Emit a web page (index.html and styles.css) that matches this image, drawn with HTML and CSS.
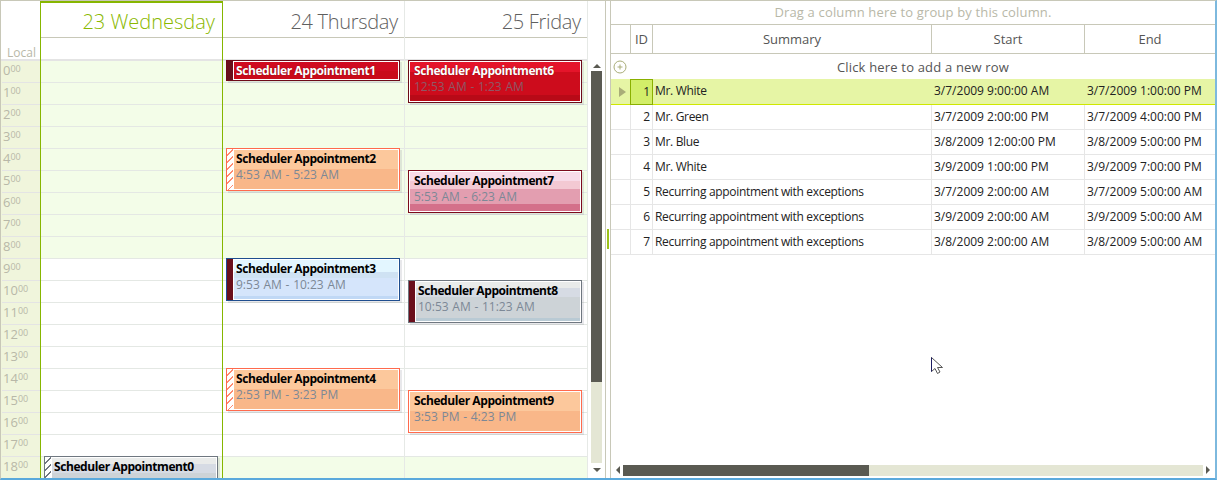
FILE: index.html
```html
<!DOCTYPE html>
<html lang="en">
<head>
<meta charset="utf-8">
<title>Scheduler and grid</title>
<link rel="stylesheet" href="styles.css">
</head>
<body>
<div class="window">
  <section class="sched">
    <div class="time-col">
      <div class="time-head">Local</div>
      <div class="hour">0<sup>00</sup></div><div class="hour">1<sup>00</sup></div><div class="hour">2<sup>00</sup></div><div class="hour">3<sup>00</sup></div><div class="hour">4<sup>00</sup></div><div class="hour">5<sup>00</sup></div><div class="hour">6<sup>00</sup></div><div class="hour">7<sup>00</sup></div><div class="hour">8<sup>00</sup></div><div class="hour">9<sup>00</sup></div><div class="hour">10<sup>00</sup></div><div class="hour">11<sup>00</sup></div><div class="hour">12<sup>00</sup></div><div class="hour">13<sup>00</sup></div><div class="hour">14<sup>00</sup></div><div class="hour">15<sup>00</sup></div><div class="hour">16<sup>00</sup></div><div class="hour">17<sup>00</sup></div><div class="hour">18<sup>00</sup></div>
    </div>

    <div class="day today">
      <div class="day-title">23 Wednesday</div>
      <div class="allday"></div>
      <div class="slots">
        <div class="slot"></div><div class="slot"></div><div class="slot"></div><div class="slot"></div><div class="slot"></div><div class="slot"></div><div class="slot"></div><div class="slot"></div><div class="slot"></div>
        <div class="slot work"></div><div class="slot work"></div><div class="slot work"></div><div class="slot work"></div><div class="slot work"></div><div class="slot work"></div><div class="slot work"></div><div class="slot work"></div><div class="slot work"></div>
        <div class="slot"></div>
        <div class="appt grey tall" style="top:395px"><div class="bar hatch-grey"></div><div class="appt-body"><b>Scheduler Appointment0</b></div></div>
      </div>
    </div>

    <div class="day">
      <div class="day-title">24 Thursday</div>
      <div class="allday"></div>
      <div class="slots">
        <div class="slot"></div><div class="slot"></div><div class="slot"></div><div class="slot"></div><div class="slot"></div><div class="slot"></div><div class="slot"></div><div class="slot"></div><div class="slot"></div>
        <div class="slot work"></div><div class="slot work"></div><div class="slot work"></div><div class="slot work"></div><div class="slot work"></div><div class="slot work"></div><div class="slot work"></div><div class="slot work"></div><div class="slot work"></div>
        <div class="slot"></div>
        <div class="appt red short" style="top:-1px"><div class="bar dark"></div><div class="appt-body"><b>Scheduler Appointment1</b></div></div>
        <div class="appt salmon" style="top:87px"><div class="bar hatch"></div><div class="appt-body"><b>Scheduler Appointment2</b><span>4:53 AM - 5:23 AM</span></div></div>
        <div class="appt blue" style="top:197px"><div class="bar dark"></div><div class="appt-body"><b>Scheduler Appointment3</b><span>9:53 AM - 10:23 AM</span></div></div>
        <div class="appt salmon" style="top:307px"><div class="bar hatch"></div><div class="appt-body"><b>Scheduler Appointment4</b><span>2:53 PM - 3:23 PM</span></div></div>
      </div>
    </div>

    <div class="day">
      <div class="day-title">25 Friday</div>
      <div class="allday"></div>
      <div class="slots">
        <div class="slot"></div><div class="slot"></div><div class="slot"></div><div class="slot"></div><div class="slot"></div><div class="slot"></div><div class="slot"></div><div class="slot"></div><div class="slot"></div>
        <div class="slot work"></div><div class="slot work"></div><div class="slot work"></div><div class="slot work"></div><div class="slot work"></div><div class="slot work"></div><div class="slot work"></div><div class="slot work"></div><div class="slot work"></div>
        <div class="slot"></div>
        <div class="appt red nobar" style="top:-1px"><div class="appt-body"><b>Scheduler Appointment6</b><span>12:53 AM - 1:23 AM</span></div></div>
        <div class="appt pink nobar" style="top:109px"><div class="appt-body"><b>Scheduler Appointment7</b><span>5:53 AM - 6:23 AM</span></div></div>
        <div class="appt grey" style="top:219px"><div class="bar dark"></div><div class="appt-body"><b>Scheduler Appointment8</b><span>10:53 AM - 11:23 AM</span></div></div>
        <div class="appt salmon nobar" style="top:329px"><div class="appt-body"><b>Scheduler Appointment9</b><span>3:53 PM - 4:23 PM</span></div></div>
      </div>
    </div>
  </section>

  <div class="vscroll">
    <i class="arrow up"></i>
    <div class="vthumb"></div>
    <div class="vtrack"></div>
    <i class="arrow down"></i>
  </div>

  <div class="splitter"><div class="grip"></div></div>

  <section class="grid">
    <div class="group">Drag a column here to group by this column.</div>
    <div class="row head">
      <div></div><div>ID</div><div>Summary</div><div>Start</div><div>End</div>
    </div>
    <div class="newrow">
      <svg class="plus" width="14" height="14" viewBox="0 0 14 14"><circle cx="7" cy="7" r="6" fill="none" stroke="#a9ad78"/><path d="M7 4.5v5M4.5 7h5" stroke="#a9ad78" fill="none"/></svg>
      <span>Click here to add a new row</span>
    </div>
    <div class="row data selected">
      <div class="ind"><i class="tri"></i></div><div class="id">1</div><div class="sum">Mr. White</div><div>3/7/2009 9:00:00 AM</div><div>3/7/2009 1:00:00 PM</div>
    </div>
    <div class="row data"><div></div><div class="id">2</div><div class="sum">Mr. Green</div><div>3/7/2009 2:00:00 PM</div><div>3/7/2009 4:00:00 PM</div></div>
    <div class="row data"><div></div><div class="id">3</div><div class="sum">Mr. Blue</div><div>3/8/2009 12:00:00 PM</div><div>3/8/2009 5:00:00 PM</div></div>
    <div class="row data"><div></div><div class="id">4</div><div class="sum">Mr. White</div><div>3/9/2009 1:00:00 PM</div><div>3/9/2009 7:00:00 PM</div></div>
    <div class="row data"><div></div><div class="id">5</div><div class="sum">Recurring appointment with exceptions</div><div>3/7/2009 2:00:00 AM</div><div>3/7/2009 5:00:00 AM</div></div>
    <div class="row data"><div></div><div class="id">6</div><div class="sum">Recurring appointment with exceptions</div><div>3/9/2009 2:00:00 AM</div><div>3/9/2009 5:00:00 AM</div></div>
    <div class="row data"><div></div><div class="id">7</div><div class="sum">Recurring appointment with exceptions</div><div>3/8/2009 2:00:00 AM</div><div>3/8/2009 5:00:00 AM</div></div>
    <div class="grid-fill"></div>
    <div class="hscroll">
      <i class="arrow left"></i>
      <div class="hthumb"></div>
      <div class="htrack"></div>
      <i class="arrow right"></i>
    </div>
    <svg class="cursor" width="14" height="20" viewBox="0 0 14 20"><path d="M1.5 1.5V15.5L5 12.5L7.5 17.5L10 16L7.5 11.5H12.5Z" fill="#fff" stroke="#555"/><path d="M1.5 1.5V15.5" stroke="#1c1c60" fill="none"/></svg>
  </section>
</div>
</body>
</html>
```

FILE: styles.css
```css
* { box-sizing: border-box; }
html, body { margin: 0; padding: 0; }
body {
  width: 1217px;
  height: 480px;
  overflow: hidden;
  background: #fff;
  font-family: "Open Sans", "Liberation Sans", sans-serif;
  font-size: 12px;
}
.window {
  display: flex;
  width: 1217px;
  height: 480px;
  overflow: hidden;
  border-top: 1px solid #c8c8b8;
  border-left: 1px solid #c8c8b8;
  border-right: 2px solid #7db9de;
  border-bottom: 2px solid #5aa9dc;
}

/* Scheduler */
.sched {
  flex: none;
  display: grid;
  grid-template-columns: 39px 183px 182px 183px;
  width: 587px;
}
.time-col { background: #f0f5dc; padding-left: 1px; }
.time-head {
  height: 60px;
  margin-left: -1px;
  padding: 44px 4px 0 0;
  background: #fff;
  border-bottom: 2px solid #e4e4e4;
  color: #b8b8a8;
  font-size: 12px;
  line-height: 15px;
  text-align: right;
}
.hour {
  height: 22px;
  padding-left: 1px;
  border-bottom: 1px solid #e4e4e4;
  color: #b8b8a8;
  font-size: 13px;
  line-height: 18px;
}
.hour sup { font-size: 9px; line-height: 0; vertical-align: 3px; }

.day { border-right: 1px solid #e6e9e6; min-width: 0; }
.day-title {
  height: 37px;
  padding: 5px 6px 0 0;
  border-top: 2px solid transparent;
  border-bottom: 1px solid #c8c8b8;
  color: #5f5f5f;
  font-size: 20px;
  font-weight: 300;
  letter-spacing: -.3px;
  line-height: 28px;
  text-align: right;
}
.allday { height: 23px; border-bottom: 2px solid #e4e4e4; }
.slots { position: relative; }
.slot {
  height: 22px;
  background: #f3fde8;
  border-bottom: 1px solid #e4e8e4;
}
.slot.work { background: #fff; }

.today { border-left: 1px solid #86b600; border-right-color: #86b600; }
.today .day-title { padding-right: 7px; color: #8ab800; border-top-color: #86b600; letter-spacing: 0; }
.today .appt { left: 3px; }

/* Appointments */
.appt {
  position: absolute;
  left: 3px;
  display: flex;
  width: 174px;
  height: 43px;
  border: 1px solid;
  box-shadow: 2px 2px 0 rgba(90, 90, 110, .14);
}
.appt.short { height: 21px; }
.bar { flex: none; width: 6px; }
.bar.dark { background: #6a0f1c; }
.bar.hatch { background: repeating-linear-gradient(135deg, #fff 0 4px, #ff8a70 4px 5px); }
.bar.hatch-grey { background: repeating-linear-gradient(135deg, #fff 0 4px, #6f7780 4px 5px); }
.appt-body {
  flex: 1;
  display: flex;
  flex-direction: column;
  min-width: 0;
  padding-left: 2px;
  border: 1px solid #fff;
  white-space: nowrap;
}
.nobar .appt-body { padding-left: 4px; }
.appt b { font-weight: 700; font-size: 12px; letter-spacing: -.42px; line-height: 16px; padding-top: 1px; color: #000; }
.appt span { color: #7c8896; font-size: 12px; word-spacing: .6px; line-height: 16px; }
.red { border-color: #6d0a18; }
.red .appt-body { background: linear-gradient(#e5142a 0 10px, #cd0c1c 10px 33px, #b80a17 33px); }
.red.short .appt-body { background: linear-gradient(#d00b20 0 9px, #c90b1a 9px); }
.appt.red b { color: #fff; text-shadow: 0 0 1px #600; }
.appt.red span { color: #8e5866; }
.salmon { border-color: #ff6a4d; }
.salmon .appt-body { background: linear-gradient(#fcc89c 0 19px, #f9b789 19px); }
.pink { border-color: #7c0a1c; }
.pink .appt-body { background: linear-gradient(#f8dbe8 0 9px, #f3c9d3 9px 17px, #e39eb0 17px 32px, #d4708a 32px); }
.blue { border-color: #1f4e8f; }
.blue .appt-body { background: linear-gradient(#e3f6ff 0 12px, #cfe2f3 12px 18px, #d5e5fb 18px 36px, #c0d8f5 36px); }
.grey { border-color: #6f7780; }
.grey .appt-body { background: linear-gradient(#e9ebea 0 6px, #d6dbe4 6px 15px, #cdd3d7 15px 36px, #b9cad4 36px); }
.tall { height: 43px; }

/* Scrollbars */
.vscroll {
  flex: none;
  display: flex;
  flex-direction: column;
  align-items: center;
  width: 18px;
  padding: 0 3px;
  border-right: 1px solid #c8c8b8;
}
.vthumb { flex: none; width: 11px; height: 311px; margin-top: 70px; background: #5a5a52; }
.vtrack { flex: none; width: 11px; height: 81px; background: #e4e6d4; }
.arrow { display: block; flex: none; width: 0; height: 0; border-style: solid; border-color: transparent; }
.arrow.up { position: absolute; top: 64px; border-width: 0 4px 4px; border-bottom-color: #5a5a52; }
.arrow.down { margin-top: 5px; border-width: 4px 4px 0; border-top-color: #5a5a52; }
.arrow.left { border-width: 4px 4px 4px 0; border-right-color: #5a5a52; }
.arrow.right { border-width: 4px 0 4px 4px; border-left-color: #5a5a52; }

.splitter { flex: none; display: flex; align-items: flex-start; width: 4px; padding: 228px 0 0 1px; }
.grip { width: 2px; height: 20px; background: #9cc21a; }

/* Grid */
.grid {
  position: relative;
  flex: 1;
  display: flex;
  flex-direction: column;
  min-width: 0;
  border-left: 1px solid #c8c8b8;
}
.group {
  flex: none;
  height: 24px;
  border-bottom: 1px solid #c8c8b8;
  color: #b8b8a8;
  font-size: 13px;
  letter-spacing: .16px;
  line-height: 23px;
  text-align: center;
}
.row { flex: none; display: grid; grid-template-columns: 20px 22px 279px 153px 130px; }
.row.head {
  height: 29px;
  border-bottom: 1px solid #c8c8b8;
  color: #555;
  font-size: 13px;
  line-height: 28px;
  text-align: center;
}
.row.head > div { border-right: 1px solid #c8c8b8; }
.row.head > div:last-child { border-right: 0; }
.newrow {
  flex: none;
  display: flex;
  align-items: center;
  height: 25px;
  padding-left: 20px;
  position: relative;
  color: #555;
  font-size: 13px;
  letter-spacing: .18px;
  justify-content: center;
}
.plus { position: absolute; left: 2px; top: 6px; }
.row.data {
  height: 25px;
  border-bottom: 1px solid #e6e6e6;
  color: #222;
  font-size: 12px;
  line-height: 24px;
  white-space: nowrap;
}
.row.data > div { padding-left: 2px; border-right: 1px solid #e6e6e6; overflow: hidden; }
.row.data > div:last-child { border-right: 0; }
.row.data > .sum { letter-spacing: -.32px; }
.row.data > .id { padding: 0 2px 0 0; text-align: right; }
.row.selected { height: 26px; background: #e6f5a5; border-bottom-color: #cfe800; }
.row.selected > div { border-right-color: transparent; }
.row.selected > .id {
  margin-left: -1px;
  height: 26px;
  border: 1px solid #8ab000;
  background: #d2ee69;
}
.ind { display: flex; align-items: center; }
.tri {
  display: block;
  margin-left: 6px;
  margin-top: -1px;
  width: 0;
  height: 0;
  border-style: solid;
  border-width: 5px 0 5px 7px;
  border-color: transparent transparent transparent #a9ad78;
}
.grid-fill { flex: 1; }
.hscroll { flex: none; display: flex; align-items: center; height: 12px; margin-bottom: 2px; padding-left: 5px; }
.hthumb { flex: none; width: 246px; height: 11px; margin-left: 3px; background: #5a5a52; }
.htrack { flex: none; width: 334px; height: 11px; background: #e4e6d4; }
.arrow.right { margin-left: 3px; }
.cursor { position: absolute; left: 319px; top: 355px; }
```
